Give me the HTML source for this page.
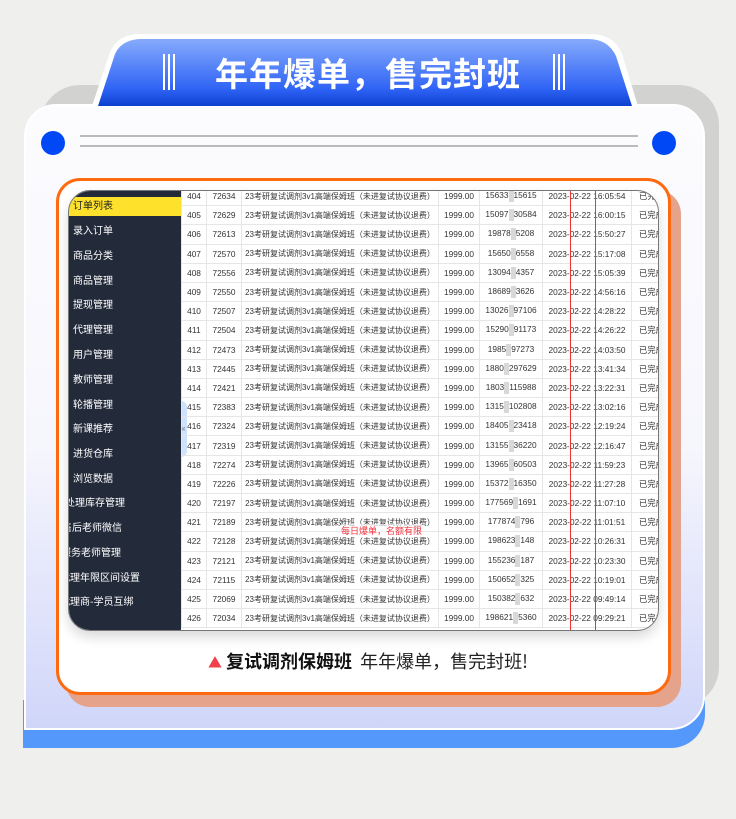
<!DOCTYPE html>
<html><head><meta charset="utf-8"><style>
*{margin:0;padding:0;box-sizing:border-box}
body{width:736px;height:819px;background:#efefed;position:relative;overflow:hidden;font-family:"Liberation Sans","Noto Sans CJK SC",sans-serif}
.abs{position:absolute}
.grey{left:40px;top:85px;width:679px;height:622px;background:#d2d2d0;border-radius:40px}
.bluebar{left:23px;top:700px;width:682px;height:48px;background:#5598fb;border-radius:0 0 34px 0}
.card{left:24px;top:104px;width:681px;height:626px;border-radius:32px 32px 34px 0;background:linear-gradient(#fcfcfe 0%,#f6f6fd 55%,#d0d6f9 100%);border:2px solid #fff}
.tab{left:90px;top:32px;width:548px;height:74px}
.title{left:0;width:736px;top:47px;text-align:center;color:#fff;font-size:33px;font-weight:bold;letter-spacing:1px;font-family:"Noto Sans CJK SC",sans-serif;line-height:50px}
.bars{top:54px;width:12px;height:36px;border-left:2px solid #fff;border-right:2px solid #fff}
.bars:after{content:"";position:absolute;left:3px;top:0;width:2px;height:36px;background:#fff}
.dot{width:24px;height:24px;border-radius:50%;background:#0048f5;top:131px}
.line{left:80px;width:558px;height:2px;background:#bbb}
.shadow2{left:66px;top:190px;width:615px;height:517px;background:linear-gradient(135deg,#ffb47a,#e4a38a 30%,#e4a38a);border-radius:24px}
.orange{left:56px;top:178px;width:615px;height:517px;background:#fff;border:3px solid #ff6a10;border-radius:24px}
.shot{left:68px;top:190px;width:591px;height:441px;border-radius:22px;overflow:hidden;border:1px solid #777;background:#fff;box-shadow:0 6px 12px rgba(0,0,0,.15)}
.side{left:0;top:0;width:112px;height:441px;background:#232b3b}
.side div{position:absolute;left:4px;font-size:10px;color:#fff;white-space:nowrap;font-family:"Noto Sans CJK SC",sans-serif;line-height:14px}
.hl{left:0;top:6px;width:112px;height:19px;background:#fde12a}
table{position:absolute;left:112px;top:-5px;width:490px;min-width:490px;border-collapse:collapse;table-layout:fixed;font-size:8.3px;color:#333;font-family:"Liberation Sans","Noto Sans CJK SC",sans-serif}
td{height:19.2px;border:1px solid #e6e6e6;text-align:center;white-space:nowrap;overflow:hidden;padding:0}
td:nth-child(3){font-size:8px}
.bl{display:inline-block;width:5px;height:12px;background:#d8d8d8;vertical-align:middle}
.red{width:1px;background:#e33;top:0;height:441px}
.cap{top:648px;left:0;width:736px;text-align:center;font-size:18px;color:#111;font-family:"Noto Sans CJK SC",sans-serif;line-height:26px}
</style></head><body>
<div class="abs grey"></div>
<div class="abs bluebar"></div>
<div class="abs card"></div>
<svg class="abs tab" viewBox="0 0 548 74" width="548" height="74"><defs><linearGradient id="g" x1="0" y1="0" x2="0" y2="1"><stop offset="0" stop-color="#86abfc"/><stop offset=".75" stop-color="#2f63f5"/><stop offset="1" stop-color="#0c3fcf"/></linearGradient></defs>
<path d="M2 74 L20 20 Q28 2 50 2 L500 2 Q524 2 532 22 L548 74 Z" fill="#fff"/>
<path d="M8 74 L25 22 Q32 7 52 7 L498 7 Q518 7 526 24 L542 74 Z" fill="url(#g)"/></svg>
<div class="abs title">年年爆单，售完封班</div>
<div class="abs bars" style="left:163px"></div>
<div class="abs bars" style="left:553px"></div>
<div class="abs dot" style="left:41px"></div>
<div class="abs dot" style="left:652px"></div>
<div class="abs line" style="top:135px"></div>
<div class="abs line" style="top:145px"></div>
<div class="abs shadow2"></div>
<div class="abs orange"></div>
<div class="abs shot">
<div class="abs side">
<div class="hl" style="position:absolute;left:0"></div>
<div style="top:7px;color:#222">订单列表</div>
<div style="top:32px">录入订单</div>
<div style="top:57px">商品分类</div>
<div style="top:82px">商品管理</div>
<div style="top:106px">提现管理</div>
<div style="top:131px">代理管理</div>
<div style="top:156px">用户管理</div>
<div style="top:181px">教师管理</div>
<div style="top:206px">轮播管理</div>
<div style="top:230px">新课推荐</div>
<div style="top:255px">进货仓库</div>
<div style="top:280px">浏览数据</div>
<div style="top:304px;left:-4px">处理库存管理</div>
<div style="top:329px;left:-7px">售后老师微信</div>
<div style="top:354px;left:-8px">服务老师管理</div>
<div style="top:379px;left:-9px">代理年限区间设置</div>
<div style="top:403px;left:-9px">代理商-学员互绑</div>
</div>
<div class="abs" style="left:112px;top:210px;width:6px;height:56px;background:#cfe2fb;border-radius:0 6px 6px 0;font-size:8px;color:#667;line-height:56px">«</div>
<table>
<colgroup><col style="width:25px"><col style="width:35px"><col style="width:197px"><col style="width:41px"><col style="width:63px"><col style="width:89px"><col style="width:40px"></colgroup>
<tr><td>404</td><td>72634</td><td>23考研复试调剂3v1高端保姆班（未进复试协议退费）</td><td>1999.00</td><td>15633<span class="bl"></span>15615</td><td>2023-02-22 16:05:54</td><td>已完成</td></tr>
<tr><td>405</td><td>72629</td><td>23考研复试调剂3v1高端保姆班（未进复试协议退费）</td><td>1999.00</td><td>15097<span class="bl"></span>30584</td><td>2023-02-22 16:00:15</td><td>已完成</td></tr>
<tr><td>406</td><td>72613</td><td>23考研复试调剂3v1高端保姆班（未进复试协议退费）</td><td>1999.00</td><td>19878<span class="bl"></span>5208</td><td>2023-02-22 15:50:27</td><td>已完成</td></tr>
<tr><td>407</td><td>72570</td><td>23考研复试调剂3v1高端保姆班（未进复试协议退费）</td><td>1999.00</td><td>15650<span class="bl"></span>6558</td><td>2023-02-22 15:17:08</td><td>已完成</td></tr>
<tr><td>408</td><td>72556</td><td>23考研复试调剂3v1高端保姆班（未进复试协议退费）</td><td>1999.00</td><td>13094<span class="bl"></span>4357</td><td>2023-02-22 15:05:39</td><td>已完成</td></tr>
<tr><td>409</td><td>72550</td><td>23考研复试调剂3v1高端保姆班（未进复试协议退费）</td><td>1999.00</td><td>18689<span class="bl"></span>3626</td><td>2023-02-22 14:56:16</td><td>已完成</td></tr>
<tr><td>410</td><td>72507</td><td>23考研复试调剂3v1高端保姆班（未进复试协议退费）</td><td>1999.00</td><td>13026<span class="bl"></span>97106</td><td>2023-02-22 14:28:22</td><td>已完成</td></tr>
<tr><td>411</td><td>72504</td><td>23考研复试调剂3v1高端保姆班（未进复试协议退费）</td><td>1999.00</td><td>15290<span class="bl"></span>91173</td><td>2023-02-22 14:26:22</td><td>已完成</td></tr>
<tr><td>412</td><td>72473</td><td>23考研复试调剂3v1高端保姆班（未进复试协议退费）</td><td>1999.00</td><td>1985<span class="bl"></span>97273</td><td>2023-02-22 14:03:50</td><td>已完成</td></tr>
<tr><td>413</td><td>72445</td><td>23考研复试调剂3v1高端保姆班（未进复试协议退费）</td><td>1999.00</td><td>1880<span class="bl"></span>297629</td><td>2023-02-22 13:41:34</td><td>已完成</td></tr>
<tr><td>414</td><td>72421</td><td>23考研复试调剂3v1高端保姆班（未进复试协议退费）</td><td>1999.00</td><td>1803<span class="bl"></span>115988</td><td>2023-02-22 13:22:31</td><td>已完成</td></tr>
<tr><td>415</td><td>72383</td><td>23考研复试调剂3v1高端保姆班（未进复试协议退费）</td><td>1999.00</td><td>1315<span class="bl"></span>102808</td><td>2023-02-22 13:02:16</td><td>已完成</td></tr>
<tr><td>416</td><td>72324</td><td>23考研复试调剂3v1高端保姆班（未进复试协议退费）</td><td>1999.00</td><td>18405<span class="bl"></span>23418</td><td>2023-02-22 12:19:24</td><td>已完成</td></tr>
<tr><td>417</td><td>72319</td><td>23考研复试调剂3v1高端保姆班（未进复试协议退费）</td><td>1999.00</td><td>13155<span class="bl"></span>36220</td><td>2023-02-22 12:16:47</td><td>已完成</td></tr>
<tr><td>418</td><td>72274</td><td>23考研复试调剂3v1高端保姆班（未进复试协议退费）</td><td>1999.00</td><td>13965<span class="bl"></span>60503</td><td>2023-02-22 11:59:23</td><td>已完成</td></tr>
<tr><td>419</td><td>72226</td><td>23考研复试调剂3v1高端保姆班（未进复试协议退费）</td><td>1999.00</td><td>15372<span class="bl"></span>16350</td><td>2023-02-22 11:27:28</td><td>已完成</td></tr>
<tr><td>420</td><td>72197</td><td>23考研复试调剂3v1高端保姆班（未进复试协议退费）</td><td>1999.00</td><td>177569<span class="bl"></span>1691</td><td>2023-02-22 11:07:10</td><td>已完成</td></tr>
<tr><td>421</td><td>72189</td><td>23考研复试调剂3v1高端保姆班（未进复试协议退费）</td><td>1999.00</td><td>177874<span class="bl"></span>796</td><td>2023-02-22 11:01:51</td><td>已完成</td></tr>
<tr><td>422</td><td>72128</td><td>23考研复试调剂3v1高端保姆班（未进复试协议退费）</td><td>1999.00</td><td>198623<span class="bl"></span>148</td><td>2023-02-22 10:26:31</td><td>已完成</td></tr>
<tr><td>423</td><td>72121</td><td>23考研复试调剂3v1高端保姆班（未进复试协议退费）</td><td>1999.00</td><td>155236<span class="bl"></span>187</td><td>2023-02-22 10:23:30</td><td>已完成</td></tr>
<tr><td>424</td><td>72115</td><td>23考研复试调剂3v1高端保姆班（未进复试协议退费）</td><td>1999.00</td><td>150652<span class="bl"></span>325</td><td>2023-02-22 10:19:01</td><td>已完成</td></tr>
<tr><td>425</td><td>72069</td><td>23考研复试调剂3v1高端保姆班（未进复试协议退费）</td><td>1999.00</td><td>150382<span class="bl"></span>632</td><td>2023-02-22 09:49:14</td><td>已完成</td></tr>
<tr><td>426</td><td>72034</td><td>23考研复试调剂3v1高端保姆班（未进复试协议退费）</td><td>1999.00</td><td>198621<span class="bl"></span>5360</td><td>2023-02-22 09:29:21</td><td>已完成</td></tr>
</table>
<div class="abs red" style="left:501px"></div>
<div class="abs red" style="left:526px"></div>
<div class="abs" style="left:272px;top:333px;font-size:9px;color:#f0323c;font-family:'Noto Sans CJK SC',sans-serif;background:rgba(255,255,255,.6)">每日爆单，名额有限</div>
</div>
<div class="abs cap"><span style="color:#f0404a;font-size:14px">▲</span> <b style="font-weight:bold">复试调剂保姆班</b>&nbsp;&nbsp;<span style="color:#222">年年爆单，售完封班!</span></div>
</body></html>
